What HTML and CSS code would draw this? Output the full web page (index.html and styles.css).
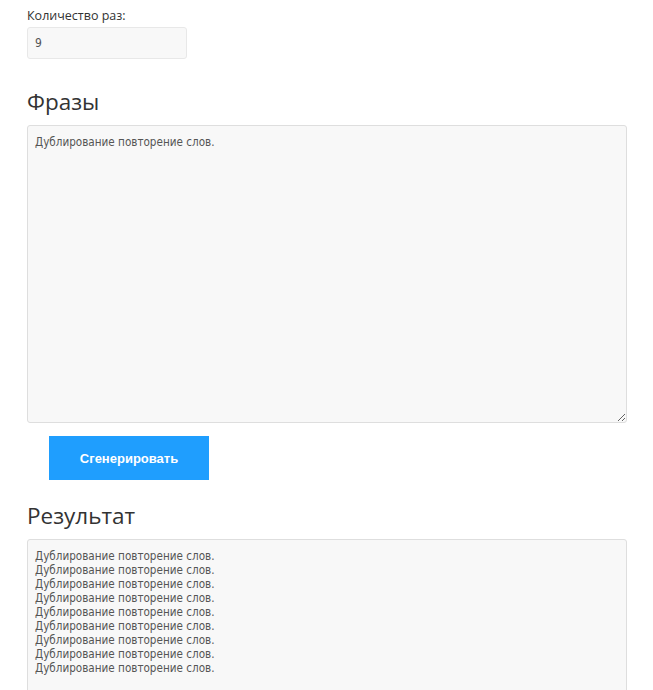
FILE: index.html
```html
<!DOCTYPE html>
<html lang="ru">
<head>
    <meta charset="UTF-8">
    <meta name="viewport" content="width=device-width, initial-scale=1.0">
    <title>Дублирование слов</title>
    <link rel="stylesheet" href="styles.css">
</head>
<body>
    <main class="tool">
        <label class="field-label" for="count">Количество раз:</label>
        <input class="count-input" id="count" type="text" value="9">

        <h2 class="section-title">Фразы</h2>
        <textarea class="text-box phrases" id="phrases">Дублирование повторение слов.</textarea>

        <button class="generate-btn" id="generate-btn">Сгенерировать</button>

        <h2 class="section-title">Результат</h2>
        <textarea class="text-box result" id="result">Дублирование повторение слов.
Дублирование повторение слов.
Дублирование повторение слов.
Дублирование повторение слов.
Дублирование повторение слов.
Дублирование повторение слов.
Дублирование повторение слов.
Дублирование повторение слов.
Дублирование повторение слов.</textarea>
    </main>
</body>
</html>
```

FILE: styles.css
```css
body {
    margin: 0;
    padding: 0;
    background-color: #fff;
    font-family: "Open Sans", "DejaVu Sans", sans-serif;
    color: #333;
}
.tool {
    display: flex;
    flex-direction: column;
    align-items: flex-start;
    padding: 7px 26px 0 27px;
}
.field-label {
    font-size: 12.5px;
    line-height: 18px;
    color: #333;
}
.count-input {
    box-sizing: border-box;
    width: 160px;
    height: 32px;
    margin-top: 2px;
    padding: 0 7px;
    border: 1px solid #e8e8e8;
    border-radius: 3px;
    background-color: #f8f8f8;
    font-family: "DejaVu Sans Condensed", "DejaVu Sans", sans-serif;
    font-size: 12px;
    color: #555;
}
.section-title {
    margin: 28px 0 8px;
    font-size: 22.5px;
    font-weight: normal;
    line-height: 30px;
    color: #333;
}
.text-box {
    box-sizing: border-box;
    width: 600px;
    padding: 9px 7px;
    border: 1px solid #dedede;
    border-radius: 3px;
    background-color: #f8f8f8;
    font-family: "DejaVu Sans Condensed", "DejaVu Sans", sans-serif;
    font-size: 11.6px;
    line-height: 14px;
    color: #555;
    resize: vertical;
}
.phrases {
    height: 298px;
}
.result {
    height: 200px;
    resize: none;
}
.generate-btn {
    width: 160px;
    height: 44px;
    margin: 13px 0 0 22px;
    border: none;
    background-color: #1f9efe;
    color: #fff;
    font-family: "Liberation Sans", Arial, sans-serif;
    font-size: 13px;
    font-weight: bold;
    cursor: pointer;
}
.generate-btn + .section-title {
    margin-top: 21px;
}
```
